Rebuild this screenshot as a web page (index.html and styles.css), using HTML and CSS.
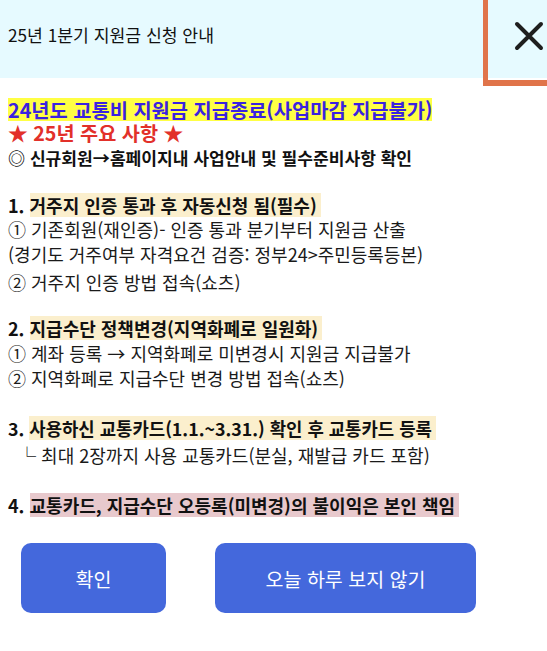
FILE: index.html
```html
<!DOCTYPE html>
<html lang="ko">
<head>
<meta charset="utf-8">
<title>25년 1분기 지원금 신청 안내</title>
<link rel="stylesheet" href="styles.css">
</head>
<body>
<div class="popup">
  <header class="popup-head">
    <h1 class="popup-title">25년 1분기 지원금 신청 안내</h1>
    <button class="close-btn" type="button" aria-label="닫기">
      <svg width="30" height="30" viewBox="0 0 30 30"><path d="M3 3 L27 27 M27 3 L3 27" stroke="#1e1e1e" stroke-width="4" stroke-linecap="round" fill="none"/></svg>
    </button>
  </header>
  <main class="popup-body">
    <div class="line l-title"><span class="hl-yellow">24년도 교통비 지원금 지급종료(사업마감 지급불가)</span></div>
    <div class="line l-star">★ 25년 주요 사항 ★</div>
    <div class="line l-notice">◎ 신규회원→홈페이지내 사업안내 및 필수준비사항 확인</div>
    <div class="sp sp-23"></div>
    <div class="line head">1. <span class="hl hl-beige">거주지 인증 통과 후 자동신청 됨(필수)</span></div>
    <div class="line">① 기존회원(재인증)- 인증 통과 분기부터 지원금 산출</div>
    <div class="line lh-26">(경기도 거주여부 자격요건 검증: 정부24&gt;주민등록등본)</div>
    <div class="line lh-30">② 거주지 인증 방법 접속(쇼츠)</div>
    <div class="sp sp-19"></div>
    <div class="line head">2. <span class="hl hl-beige">지급수단 정책변경(지역화폐로 일원화)</span></div>
    <div class="line lh-26">① 계좌 등록 → 지역화폐로 미변경시 지원금 지급불가</div>
    <div class="line">② 지역화폐로 지급수단 변경 방법 접속(쇼츠)</div>
    <div class="sp sp-26"></div>
    <div class="line head h-narrow">3. <span class="hl hl-beige">사용하신 교통카드(1.1.~3.31.) 확인 후 교통카드 등록</span></div>
    <div class="line lh-30">&nbsp;&nbsp;└ 최대 2장까지 사용 교통카드(분실, 재발급 카드 포함)</div>
    <div class="sp sp-23"></div>
    <div class="line head">4. <span class="hl hl-pink">교통카드, 지급수단 오등록(미변경)의 불이익은 본인 책임</span></div>
  </main>
  <footer class="popup-foot">
    <button class="btn btn-ok" type="button">확인</button>
    <button class="btn btn-today" type="button">오늘 하루 보지 않기</button>
  </footer>
</div>
</body>
</html>
```

FILE: styles.css
```css
* { box-sizing: border-box; }
html, body { margin: 0; padding: 0; background: #ffffff; }
body {
  font-family: "Noto Sans CJK KR", "Noto Sans", sans-serif;
  color: #111111;
  width: 547px;
  height: 651px;
  overflow: hidden;
}
.popup-head {
  position: relative;
  height: 78px;
  background: #e6faff;
  padding: 23px 8px 0;
}
.popup-title {
  margin: 0;
  font-size: 17.2px;
  font-weight: 400;
  line-height: 24px;
  color: #111;
}
.close-btn {
  position: absolute;
  top: 0;
  right: 0;
  width: 64px;
  height: 86px;
  margin: 0;
  padding: 21px 3px 0 0;
  background: transparent;
  border: 0;
  border-left: 5.5px solid #e0744a;
  border-bottom: 6px solid #e0744a;
  display: flex;
  justify-content: flex-end;
  align-items: flex-start;
  cursor: pointer;
}
.popup-body {
  padding: 16px 8px 0;
}
.line {
  font-size: 18px;
  line-height: 24px;
  height: 24px;
  white-space: nowrap;
  color: #1a1a1a;
}
.lh-26 { line-height: 26px; height: 26px; }
.lh-30 { line-height: 30px; height: 30px; }
.l-title {
  font-size: 19.8px;
  font-weight: 700;
  line-height: 26px;
  height: 26px;
}
.hl-yellow {
  display: inline-block;
  background: #ffff44;
  color: #3a22e0;
  line-height: 23px;
  vertical-align: middle;
}
.l-star {
  font-size: 19.7px;
  font-weight: 700;
  color: #e2302a;
  line-height: 26px;
  height: 26px;
}
.l-notice {
  font-size: 17.1px;
  font-weight: 700;
  color: #111;
}
.head {
  font-weight: 700;
  color: #111;
}
.h-narrow { font-size: 17.8px; }
.hl {
  display: inline-block;
  line-height: 24px;
  padding-right: 4px;
}
.hl-beige { background: #fbefcd; }
.hl-pink { background: #e8c9cd; }
.sp-19 { height: 19px; }
.sp-23 { height: 23px; }
.sp-26 { height: 26px; }
.popup-foot {
  display: flex;
  gap: 49px;
  padding: 26px 0 0 21px;
}
.btn {
  height: 70px;
  border: 0;
  border-radius: 10px;
  background: #4468dc;
  color: #ffffff;
  font-family: "Noto Sans CJK KR", "Noto Sans", sans-serif;
  font-size: 19.5px;
  font-weight: 400;
  cursor: pointer;
}
.btn-ok { width: 145px; }
.btn-today { width: 261px; }
```
